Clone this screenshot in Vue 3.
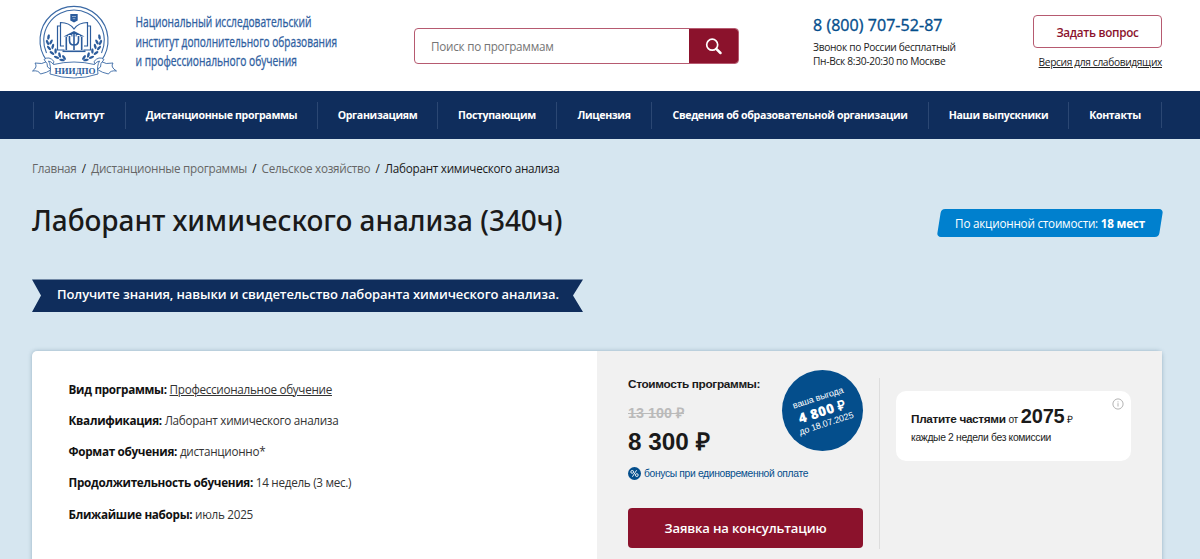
<script setup>
const nav = [
  'Институт',
  'Дистанционные программы',
  'Организациям',
  'Поступающим',
  'Лицензия',
  'Сведения об образовательной организации',
  'Наши выпускники',
  'Контакты',
]
const crumbs = ['Главная', 'Дистанционные программы', 'Сельское хозяйство']
const facts = [
  { label: 'Вид программы:', value: 'Профессиональное обучение', link: true },
  { label: 'Квалификация:', value: 'Лаборант химического анализа' },
  { label: 'Формат обучения:', value: 'дистанционно*' },
  { label: 'Продолжительность обучения:', value: '14 недель (3 мес.)' },
  { label: 'Ближайшие наборы:', value: 'июль 2025' },
]
// Leaves of one laurel branch: x, y, rotation
const leaves = [
  [16.5, 37, 10], [15.5, 42.5, -25], [19, 42, 30], [17, 48, -40], [20.8, 46.5, 15],
  [20, 53, -55], [23.6, 51, 0], [24.5, 57.3, -70], [27.6, 55, -15], [30, 60, -80], [32, 57.5, -35],
]
</script>

<template>
  <div class="page">
    <header class="header">
      <svg class="logo" viewBox="0 0 310 90" width="310" height="90">
        <g fill="none" stroke="#3a69a5">
          <path d="M15 61A34 34 0 1 1 69 61" stroke-width="1.100" />
          <path d="M14.500 53A30.300 30.300 0 1 1 69.500 53" stroke-width="1.100" />
        </g>
        <g fill="none" stroke="#2c5c9c" stroke-width="1.200">
          <path d="M28 26h-2.500v24h7M56 26h2.500v24h-7" />
          <path d="M32 46h-3.500V22.500q9 0 13.500 6.500q4.500-6.500 13.500-6.500V46H52" />
          <path d="M31.500 36.500l10.500-5.500 10.500 5.500z" fill="#2c5c9c" stroke="none" />
          <path d="M34.300 37v13M49.700 37v13" stroke-width="1.600" />
          <path d="M30.500 51.300h23" stroke-width="1.600" />
          <path d="M37.800 35v5.500q0 4.500 4.200 4.500t4.200-4.500V35M42 34v16" stroke="#fff" stroke-width="3.200" />
          <path d="M37.500 36v4.500q0 4.500 4.500 4.500t4.500-4.500V36M42 33V50" stroke-width="1.600" />
        </g>
        <path d="M38.300 14h7.400v6.500L42 22.500l-3.700-2z" fill="#2c5c9c" />
        <path d="M40 16.500h4M40.700 18.700h2.600" stroke="#a9c0db" stroke-width=".8" />
        <g fill="#2c5c9c">
          <ellipse v-for="(l, i) in leaves" :key="'l' + i" rx="1.250" ry="2.800" :transform="`translate(${l[0]} ${l[1]}) rotate(${l[2]})`" />
          <ellipse v-for="(l, i) in leaves" :key="'r' + i" rx="1.250" ry="2.800" :transform="`translate(${84 - l[0]} ${l[1]}) rotate(${-l[2]})`" />
        </g>
        <g fill="#fff" stroke="#3a69a5" stroke-width=".9" stroke-linejoin="round">
          <path d="M16 61q-6 4-13 2q3 4-2.500 8q6-1 8 3q6-1 12-5zM68 61q6 4 13 2q-3 4 3.500 8q-6-1-8 3q-6-1-12-5z" />
          <path d="M12 59.500q5-4 10 2l-3 8q-5-2-4-6zM72 59.500q-5-4-10 2l3 8q5-2 4-6z" />
          <path d="M21.500 64.500q20.500-5 41 0q2-3 5-3.500q-3 5-1.500 13q-24 8-48 0q1.500-8-1.500-13q3 .5 5 3.500z" />
        </g>
        <text class="logo-mark" x="22.500" y="74" textLength="41" lengthAdjust="spacing">НИИДПО</text>
        <g class="logo-name">
          <text x="103.500" y="27.300" textLength="176" lengthAdjust="spacingAndGlyphs">Национальный исследовательский</text>
          <text x="103.500" y="46.600" textLength="201.500" lengthAdjust="spacingAndGlyphs">институт дополнительного образования</text>
          <text x="103.500" y="66" textLength="161.500" lengthAdjust="spacingAndGlyphs">и профессионального обучения</text>
        </g>
      </svg>
      <form class="search" @submit.prevent>
        <span class="placeholder">Поиск по программам</span>
        <button class="search-btn" aria-label="Поиск">
          <svg width="18" height="18" viewBox="0 0 18 18" fill="none" stroke="#fff">
            <circle cx="7.200" cy="7.700" r="5.500" stroke-width="1.700" />
            <path d="M11.300 11.800l4.200 4.200" stroke-width="2.500" stroke-linecap="round" />
          </svg>
        </button>
      </form>
      <div class="phone">
        <div class="number">8 (800) 707-52-87</div>
        <div class="note">Звонок по России бесплатный</div>
        <div class="note">Пн-Вск 8:30-20:30 по Москве</div>
      </div>
      <div class="actions">
        <button class="ask">Задать вопрос</button>
        <a class="access">Версия для слабовидящих</a>
      </div>
    </header>

    <nav class="nav">
      <div class="nav-row">
        <a v-for="n in nav" :key="n">{{ n }}</a>
      </div>
    </nav>

    <main class="main">
      <div class="crumbs">
        <template v-for="c in crumbs" :key="c"><a>{{ c }}</a><i>/</i></template><span>Лаборант химического анализа</span>
      </div>
      <div class="title-row">
        <h1>Лаборант химического анализа (340ч)</h1>
        <div class="promo">По акционной стоимости: <b>18 мест</b></div>
      </div>
      <div class="ribbon">Получите знания, навыки и свидетельство лаборанта химического анализа.</div>

      <section class="card">
        <div class="facts">
          <div v-for="f in facts" :key="f.label" class="fact"><b>{{ f.label }}</b>&nbsp;<span :class="{ link: f.link }">{{ f.value }}</span></div>
        </div>
        <div class="offer">
          <div class="price">
            <div class="price-label">Стоимость программы:</div>
            <div class="old">13 100 ₽</div>
            <div class="new">8 300 ₽</div>
            <div class="bonus">
              <svg width="13" height="13" viewBox="0 0 13 13">
                <circle cx="6.500" cy="6.500" r="6.500" fill="#044e8c" />
                <g fill="none" stroke="#fff" stroke-width=".9">
                  <circle cx="4.200" cy="4.900" r="1.400" /><circle cx="8.800" cy="8.100" r="1.400" /><path d="M8.600 3.200L4.400 9.800" />
                </g>
              </svg>
              <span>бонусы при единовременной оплате</span>
            </div>
            <button class="apply">Заявка на консультацию</button>
            <div class="badge">
              <div class="badge-text">
                <div>ваша выгода</div>
                <strong>4 800 ₽</strong>
                <div>до 18.07.2025</div>
              </div>
            </div>
          </div>
          <div class="parts-col">
            <div class="parts">
              <div class="parts-main"><b>Платите частями</b> <span class="from">от</span> <strong>2075</strong> <small>₽</small></div>
              <div class="parts-note">каждые 2 недели без комиссии</div>
              <svg class="info" width="12" height="12" viewBox="0 0 12 12" fill="none" stroke="#aaa">
                <circle cx="6" cy="6" r="5.100" stroke-width=".9" />
                <path d="M6 5.200v3.300M6 3.400v1" stroke-width=".9" />
              </svg>
            </div>
          </div>
        </div>
      </section>
    </main>
  </div>
</template>

<style>
body { overflow: hidden; }
</style>

<style scoped>
.page {
  height: 559px;
  overflow: hidden;
  background: #d6e6f0;
  font-family: 'Open Sans', 'Noto Sans', sans-serif;
  color: #1a1a1a;
}
.page * { box-sizing: border-box; }
button { font-family: inherit; padding: 0; margin: 0; }
.header {
  height: 91px;
  background: #fff;
  padding-left: 32px;
  display: flex;
  align-items: flex-start;
}
.logo { flex: none; display: block; overflow: visible; }
.logo-mark { font: bold 9px 'Liberation Serif', serif; fill: #2c5c9c; }
.logo-name { font: 400 14px 'Open Sans', sans-serif; fill: #2f609f; stroke: #2f609f; stroke-width: .3px; }
.search {
  flex: none;
  margin: 28px 0 0 72px;
  width: 325px;
  height: 36px;
  border: 1px solid #b65a70;
  border-radius: 4px;
  display: flex;
  justify-content: space-between;
  align-items: center;
  overflow: hidden;
}
.placeholder { margin-left: 16px; font-size: 11.7px; letter-spacing: -.25px; color: #757575; }
.search-btn {
  width: 50px;
  height: 36px;
  margin-right: -1px;
  border: 0;
  background: #8b122c;
  display: flex;
  align-items: center;
  justify-content: center;
}
.phone { flex: none; width: 220px; margin: 14px 0 0 74px; white-space: nowrap; }
.number { font-size: 16px; line-height: 22px; letter-spacing: .05px; color: #044e8c; -webkit-text-stroke: .35px #044e8c; }
.note { font-size: 10.2px; letter-spacing: -.31px; line-height: 14px; color: #222; }
.number + .note { margin-top: 4px; }
.actions { flex: none; width: 129px; margin-top: 15px; display: flex; flex-direction: column; align-items: flex-end; }
.ask {
  width: 129px;
  height: 33px;
  border: 1px solid #b65a70;
  border-radius: 4px;
  background: #fff;
  color: #8b122c;
  font-size: 11.7px;
  letter-spacing: -.28px;
  font-weight: 600;
}
.access { margin-top: 7px; font-size: 10.2px; letter-spacing: -.35px; line-height: 14px; text-decoration: underline; white-space: nowrap; color: #222; }
.nav { height: 48px; background: #0f2d5c; padding: 11px 0 0 33px; }
.nav-row {
  width: 1129px;
  height: 26px;
  display: grid;
  grid-template-columns: 92px 192px 120px 119px 95px 277px 140px 93px;
  border-right: 1px solid #2b4773;
}
.nav-row a {
  border-left: 1px solid #2b4773;
  color: #fff;
  font-size: 10.6px;
  letter-spacing: -.33px;
  font-weight: 700;
  line-height: 27px;
  text-align: center;
  white-space: nowrap;
}
.main { padding-left: 32px; width: 1162px; }
.crumbs { padding-top: 20px; font-size: 11.7px; letter-spacing: -.26px; line-height: 19px; white-space: nowrap; }
.crumbs a { color: #666; }
.crumbs i { font-style: normal; margin: 0 5.3px; }
.title-row { display: flex; justify-content: space-between; align-items: flex-start; height: 101px; }
h1 { margin: 22px 0 0; font: 500 28px/40px 'Noto Sans', 'Open Sans', sans-serif; letter-spacing: -.04px; white-space: nowrap; }
.promo {
  position: relative;
  z-index: 0;
  margin: 31px -1px 0 0;
  width: 226px;
  height: 28px;
  line-height: 29px;
  text-align: center;
  color: #fff;
  font-size: 11.7px;
  letter-spacing: -.22px;
  white-space: nowrap;
}
.promo::before {
  content: '';
  position: absolute;
  z-index: -1;
  inset: 0 2px;
  border-radius: 4px;
  background: #0080ce;
  transform: skewX(-9deg);
}
.ribbon {
  width: 551px;
  height: 33px;
  line-height: 31px;
  padding-left: 25px;
  color: #fff;
  background: #0f2d5c;
  font-size: 13px;
  letter-spacing: -.1px;
  font-weight: 600;
  white-space: nowrap;
  clip-path: polygon(0 .6px, 100% .6px, 541px 50%, 100% 100%, 0 100%, 9px 50%);
}
.card {
  margin-top: 39px;
  width: 1130px;
  height: 230px;
  display: flex;
  background: #fff;
  border-radius: 5px 5px 0 0;
  box-shadow: 0 0 4px rgba(60, 100, 130, .4);
}
.facts { width: 565px; padding: 22.8px 0 0 36.5px; font-size: 11.7px; letter-spacing: -.29px; line-height: 31.2px; white-space: nowrap; color: #333; }
.facts b { color: #111; font-weight: 700; }
.link { text-decoration: underline; }
.offer { width: 565px; background: #f1f1f1; display: flex; font-family: 'Liberation Sans', Arial, sans-serif; }
.price { position: relative; width: 283px; padding: 25px 0 0 31px; white-space: nowrap; }
.price::after { content: ''; position: absolute; left: 282px; top: 27px; width: 1px; height: 171px; background: #ddd; }
.price-label { font-size: 11.8px; letter-spacing: -.33px; line-height: 17px; font-weight: 700; }
.old { margin-top: 11px; font-size: 14.4px; line-height: 18px; font-weight: 700; color: #bababa; text-decoration: line-through; }
.new { margin-top: 5px; font-size: 24.3px; line-height: 30px; font-weight: 700; }
.bonus { margin-top: 8px; height: 16px; display: flex; align-items: center; gap: 3px; font-size: 10.3px; letter-spacing: -.34px; color: #044e8c; }
.apply {
  display: block;
  width: 235px;
  height: 40px;
  margin-top: 27px;
  border: 0;
  border-radius: 4px;
  background: #8b122c;
  color: #fff;
  font: 600 13.1px 'Open Sans', sans-serif;
  letter-spacing: -.15px;
}
.badge {
  position: absolute;
  left: 185px;
  top: 19px;
  width: 81px;
  height: 81px;
  border-radius: 50%;
  background: #044e8c;
  color: #fff;
  display: flex;
  align-items: center;
  justify-content: center;
}
.badge-text { transform: rotate(-18deg); text-align: center; font-size: 9px; letter-spacing: -.1px; line-height: 11.5px; }
.badge-text strong { display: block; font: 800 13.5px/15px 'Open Sans', sans-serif; letter-spacing: .4px; }
.parts-col { padding: 40px 0 0 16px; }
.parts { position: relative; width: 235px; height: 70px; padding: 11px 0 0 15px; border-radius: 10px; background: #fff; white-space: nowrap; }
.parts-main { font-size: 11.8px; letter-spacing: -.35px; line-height: 28px; }
.parts-main strong { font-size: 20px; letter-spacing: -.2px; }
.from, .parts-main small { font-size: 10.2px; }
.parts-note { margin-top: -3px; font-size: 10.3px; letter-spacing: -.32px; line-height: 14px; color: #222; }
.info { position: absolute; right: 7px; top: 7px; }
</style>
